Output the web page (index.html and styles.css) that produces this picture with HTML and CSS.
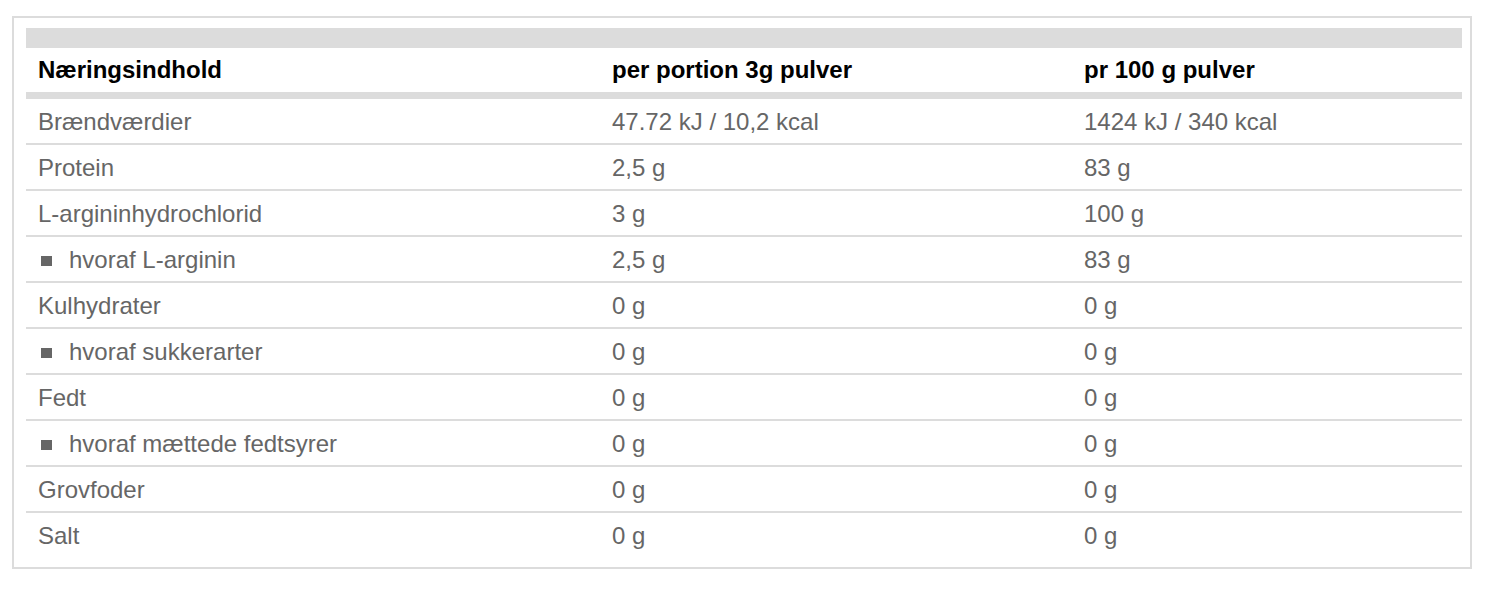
FILE: index.html
```html
<!DOCTYPE html>
<html lang="da">
<head>
<meta charset="utf-8">
<title>Næringsindhold</title>
<link rel="stylesheet" href="styles.css">
</head>
<body>
<div class="box">
  <table class="nutri">
    <colgroup>
      <col class="c1"><col class="c2"><col class="c3">
    </colgroup>
    <thead>
      <tr class="bar"><td colspan="3"></td></tr>
      <tr class="head">
        <th>Næringsindhold</th>
        <th>per portion 3g pulver</th>
        <th>pr 100 g pulver</th>
      </tr>
    </thead>
    <tbody>
      <tr><td>Brændværdier</td><td>47.72 kJ / 10,2 kcal</td><td>1424 kJ / 340 kcal</td></tr>
      <tr><td>Protein</td><td>2,5 g</td><td>83 g</td></tr>
      <tr><td>L-argininhydrochlorid</td><td>3 g</td><td>100 g</td></tr>
      <tr><td><span class="sq"></span>hvoraf L-arginin</td><td>2,5 g</td><td>83 g</td></tr>
      <tr><td>Kulhydrater</td><td>0 g</td><td>0 g</td></tr>
      <tr><td><span class="sq"></span>hvoraf sukkerarter</td><td>0 g</td><td>0 g</td></tr>
      <tr><td>Fedt</td><td>0 g</td><td>0 g</td></tr>
      <tr><td><span class="sq"></span>hvoraf mættede fedtsyrer</td><td>0 g</td><td>0 g</td></tr>
      <tr><td>Grovfoder</td><td>0 g</td><td>0 g</td></tr>
      <tr><td>Salt</td><td>0 g</td><td>0 g</td></tr>
    </tbody>
  </table>
</div>
</body>
</html>
```
FILE: styles.css
```css
html, body {
  margin: 0;
  padding: 0;
  background: #fff;
}
body {
  padding: 16px 20px 24px 12px;
  font-family: "Liberation Sans", Arial, sans-serif;
}
.box {
  border: 2px solid #dcdcdc;
  padding: 10px 8px 10px 12px;
}
.nutri {
  width: 1436px;
  border-collapse: collapse;
  font-size: 24px;
  line-height: 28px;
}
.c1 { width: 574px; }
.c2 { width: 472px; }
.c3 { width: 390px; }
.bar td {
  height: 20px;
  padding: 0;
  background: #dcdcdc;
}
.head th {
  height: 44px;
  padding: 0 12px;
  text-align: left;
  font-weight: bold;
  color: #000;
  border-bottom: 7px solid #dcdcdc;
  vertical-align: middle;
}
tbody td {
  height: 42px;
  padding: 2px 12px 0;
  color: #666;
  vertical-align: middle;
  border-bottom: 2px solid #dcdcdc;
}
tbody tr:last-child td {
  border-bottom: none;
}
.sq {
  display: inline-block;
  width: 11px;
  height: 10px;
  background: #666;
  margin: 0 17px 0 3px;
  vertical-align: 2px;
}
```
